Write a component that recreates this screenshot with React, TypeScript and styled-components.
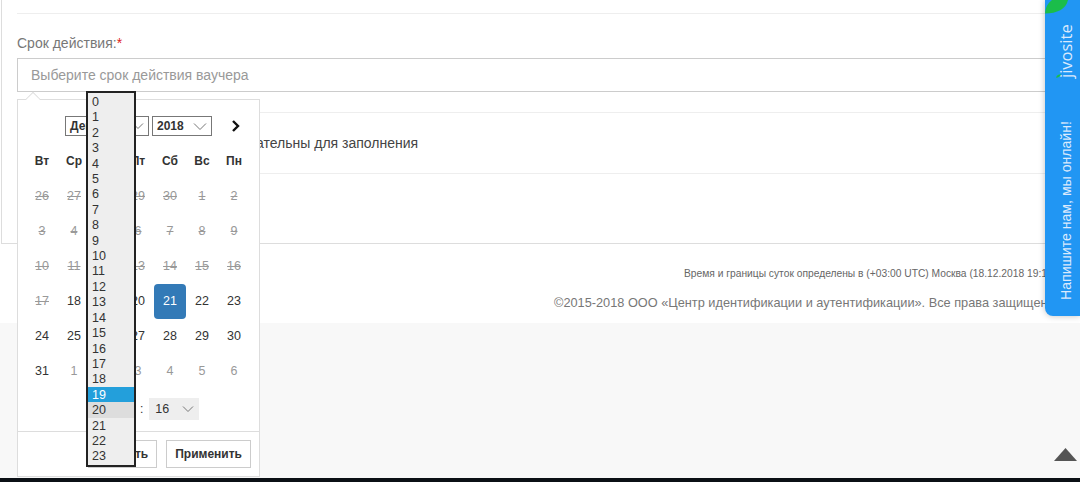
import React from "react";
import styled, { createGlobalStyle } from "styled-components";

const Global = createGlobalStyle`
  html, body { margin: 0; padding: 0; height: 100%; overflow: hidden; background: #f8f8f8; }
  body { font-family: "Liberation Sans", Arial, sans-serif; color: #333; }
  #root { height: 100%; }
`;

const Page = styled.div`
  position: relative;
  width: 1080px;
  height: 482px;
  overflow: hidden;
  display: flex;
  flex-direction: column;
`;
const Top = styled.div`
  height: 323px;
  flex: none;
  background: #fff;
  padding-left: 1px;
  box-sizing: border-box;
`;
const Panel = styled.div`
  height: 244px;
  box-sizing: border-box;
  border-left: 1px solid #ddd;
  border-bottom: 1px solid #ddd;
  padding: 13px 0 0 15px;
`;
const Rule = styled.div`
  height: 1px;
  background: #eee;
`;
const Field = styled.div`
  padding-top: 19px;
  margin-right: 16px;
`;
const Label = styled.div`
  font-size: 14px;
  line-height: 20px;
  color: #777;
  margin-bottom: 5px;
`;
const Req = styled.span`
  color: #e02020;
`;
const InputBox = styled.div`
  height: 34px;
  box-sizing: border-box;
  border: 1px solid #ccc;
  padding-left: 13px;
  font-size: 14px;
  line-height: 32px;
  color: #999;
`;
const Note = styled.div`
  margin-top: 20px;
  border-top: 1px solid #eee;
  border-bottom: 1px solid #eee;
  height: 62px;
  box-sizing: border-box;
  padding-left: 5px;
  margin-right: 16px;
  font-size: 14px;
  line-height: 60px;
  color: #444;
  white-space: nowrap;
`;
const Footer = styled.div`
  padding-left: 683px;
  white-space: nowrap;
`;
const Small = styled.div`
  font-size: 10.25px;
  line-height: 14px;
  padding-top: 23px;
  color: #666;
`;
const Copy = styled.div`
  margin-left: -130px;
  font-size: 12.75px;
  line-height: 20px;
  margin-top: 12px;
  color: #777;
`;
const Spacer = styled.div`
  flex: 1;
  background: #f8f8f8;
`;
const DarkBar = styled.div`
  height: 4px;
  flex: none;
  background: #0b1015;
`;

const Popup = styled.div`
  position: absolute;
  left: 17px;
  top: 99px;
  width: 243px;
  height: 378px;
  box-sizing: border-box;
  background: #fff;
  border: 1px solid #ddd;
  display: flex;
  flex-direction: column;
  &::before {
    content: "";
    position: absolute;
    left: 9px;
    top: -7px;
    width: 11px;
    height: 11px;
    background: #fff;
    border-left: 1px solid #ddd;
    border-top: 1px solid #ddd;
    transform: rotate(45deg) scale(0.85);
  }
`;
const CalBody = styled.div`
  flex: 1;
  padding: 16px 8px 0;
`;
const MonthRow = styled.div`
  display: flex;
  align-items: center;
  height: 20px;
  padding-left: 39px;
  gap: 3px;
`;
const Sel = styled.div<{ $w: number }>`
  width: ${(p) => p.$w}px;
  height: 20px;
  box-sizing: border-box;
  border: 1px solid #777;
  font-size: 12px;
  font-weight: 700;
  line-height: 18px;
  padding-left: 4px;
  color: #333;
  display: flex;
  align-items: center;
  justify-content: space-between;
  svg { margin-right: 4px; }
`;
const NextBtn = styled.div`
  margin-left: 16px;
  display: flex;
`;
const Grid = styled.div`
  display: grid;
  grid-template-columns: repeat(7, 32px);
  grid-auto-rows: 35px;
  margin-top: 8px;
`;
const Head = styled.div`
  display: flex;
  align-items: center;
  justify-content: center;
  padding-bottom: 2px;
  box-sizing: border-box;
  font-size: 12px;
  font-weight: 700;
  color: #333;
`;
const Day = styled.div<{ $k?: string }>`
  display: flex;
  align-items: center;
  justify-content: center;
  padding-bottom: 2px;
  box-sizing: border-box;
  font-size: 12.5px;
  border-radius: 4px;
  color: ${(p) => (p.$k === "sel" ? "#fff" : p.$k === "off" || p.$k === "dis" ? "#999" : "#333")};
  background: ${(p) => (p.$k === "sel" ? "#337ab7" : "transparent")};
  text-decoration: ${(p) => (p.$k === "dis" ? "line-through" : "none")};
`;
const TimeRow = styled.div`
  display: flex;
  align-items: center;
  height: 22px;
  margin-top: 9px;
  padding-left: 60px;
  font-size: 12px;
`;
const HourSel = styled.div`
  width: 50px;
  height: 22px;
  box-sizing: border-box;
  background: #eee;
  font-size: 12.5px;
  padding: 0 5px 0 6px;
  margin-left: 6px;
  color: #333;
  display: flex;
  align-items: center;
  justify-content: space-between;
`;
const HourBack = styled(HourSel)`
  margin: 0 4px 0 0;
`;
const Actions = styled.div`
  height: 45px;
  border-top: 1px solid #ddd;
  box-sizing: border-box;
  display: flex;
  justify-content: flex-end;
  align-items: flex-start;
  gap: 9px;
  padding: 8px 8px 0 0;
`;
const Btn = styled.div<{ $tight?: boolean }>`
  height: 28px;
  box-sizing: border-box;
  border: 1px solid #ccc;
  font-size: 12px;
  font-weight: 700;
  line-height: 26px;
  padding: 0 8px 0 ${(p) => (p.$tight ? 2 : 8)}px;
  color: #333;
`;
const HourList = styled.div`
  position: absolute;
  left: 86px;
  top: 91px;
  width: 50px;
  height: 376px;
  box-sizing: border-box;
  border: 2px solid #222;
  background: #eee;
  padding-top: 1px;
  font-size: 12.5px;
  overflow: hidden;
`;
const HourItem = styled.div<{ $k?: string }>`
  height: 15.42px;
  line-height: 17px;
  padding-left: 4px;
  color: ${(p) => (p.$k === "sel" ? "#fff" : "#333")};
  background: ${(p) => (p.$k === "sel" ? "#239fdb" : p.$k === "hov" ? "#ddd" : "transparent")};
`;

const Widget = styled.div`
  position: absolute;
  right: 0;
  top: 0;
  width: 35px;
  height: 316px;
  background: #2196f3;
  border-bottom-left-radius: 8px;
  box-shadow: 0 0 6px rgba(0, 0, 0, 0.25);
  overflow: hidden;
  display: flex;
  flex-direction: column;
  align-items: center;
`;
const Leaf = styled.svg`
  position: absolute;
  left: 0;
  top: 0;
`;
const VText = styled.div`
  writing-mode: vertical-rl;
  transform: rotate(180deg);
  white-space: nowrap;
  color: #dbeafd;
  margin-left: 6px;
`;
const Brand = styled(VText)`
  margin-top: 26px;
  font-family: "Open Sans", sans-serif;
  font-size: 16.5px;
  line-height: 18px;
  height: 52px;
`;
const Msg = styled(VText)`
  margin-top: 43px;
  font-size: 14.1px;
  line-height: 18px;
  height: 179px;
`;
const BrandDot = styled.svg`
  position: absolute;
  left: 11px;
  top: 74px;
`;
const ToTop = styled.svg`
  position: absolute;
  left: 1054px;
  top: 448px;
`;

const Chevron = ({ size = 12 }: { size?: number }) => (
  <svg width={size} height={8} viewBox={`0 0 ${size} 8`} fill="none">
    <path d={`M1 1.5 L${size / 2} ${size / 2 + 0.5} L${size - 1} 1.5`} stroke="#777" strokeWidth="1" />
  </svg>
);

const heads = ["Вт", "Ср", "Чт", "Пт", "Сб", "Вс", "Пн"];
const days: [string, string?][] = [
  ...["26", "27", "28", "29", "30", "1", "2", "3", "4", "5", "6", "7", "8", "9", "10", "11", "12", "13", "14", "15", "16", "17"].map(
    (d) => [d, "dis"] as [string, string]
  ),
  ["18"], ["19"], ["20"], ["21", "sel"], ["22"], ["23"],
  ["24"], ["25"], ["26"], ["27"], ["28"], ["29"], ["30"],
  ["31"], ["1", "off"], ["2", "off"], ["3", "off"], ["4", "off"], ["5", "off"], ["6", "off"],
];
const hours = Array.from({ length: 24 }, (_, i) => i);

export default function App() {
  return (
    <Page>
      <Global />
      <Top>
        <Panel>
          <Rule />
          <Field>
            <Label>
              Срок действия:<Req>*</Req>
            </Label>
            <InputBox>Выберите срок действия ваучера</InputBox>
          </Field>
          <Note>Поля, отмеченные звёздочкой, обязательны для заполнения</Note>
        </Panel>
        <Footer>
          <Small>Время и границы суток определены в (+03:00 UTC) Москва (18.12.2018 19:16)</Small>
          <Copy>©2015-2018 ООО «Центр идентификации и аутентификации». Все права защищены.</Copy>
        </Footer>
      </Top>
      <Spacer />
      <DarkBar />

      <Popup>
        <CalBody>
          <MonthRow>
            <Sel $w={84}>
              Декабрь <Chevron />
            </Sel>
            <Sel $w={60}>
              2018 <Chevron size={14} />
            </Sel>
            <NextBtn>
              <svg width="10" height="14" viewBox="0 0 10 14" fill="none">
                <path d="M2 2 L7 7 L2 12" stroke="#111" strokeWidth="2.4" />
              </svg>
            </NextBtn>
          </MonthRow>
          <Grid>
            {heads.map((h) => (
              <Head key={h}>{h}</Head>
            ))}
            {days.map(([d, k], i) => (
              <Day key={i} $k={k}>
                {d}
              </Day>
            ))}
          </Grid>
          <TimeRow>
            <HourBack>
              19 <Chevron />
            </HourBack>
            :
            <HourSel>
              16 <Chevron />
            </HourSel>
          </TimeRow>
        </CalBody>
        <Actions>
          <Btn $tight>Очистить</Btn>
          <Btn>Применить</Btn>
        </Actions>
      </Popup>

      <HourList>
        {hours.map((h) => (
          <HourItem key={h} $k={h === 19 ? "sel" : h === 20 ? "hov" : undefined}>
            {h}
          </HourItem>
        ))}
      </HourList>

      <Widget>
        <Leaf width="24" height="14" viewBox="0 0 24 14">
          <path d="M0 13.5 C0.5 7 3 3 7 0 L23 0 C21 9 12 13.5 0 13.5 Z" fill="#1bbd4a" />
        </Leaf>
        <Brand>jivosite</Brand>
        <BrandDot width="5" height="4" viewBox="0 0 6 4">
          <path d="M0 4 C1 1 3 0 6 0 C5 3 3 4 0 4 Z" fill="#1bbd4a" />
        </BrandDot>
        <Msg>Напишите нам, мы онлайн!</Msg>
      </Widget>

      <ToTop width="23" height="13" viewBox="0 0 23 13">
        <path d="M11.5 0 L23 13 L0 13 Z" fill="#555" />
      </ToTop>
    </Page>
  );
}
